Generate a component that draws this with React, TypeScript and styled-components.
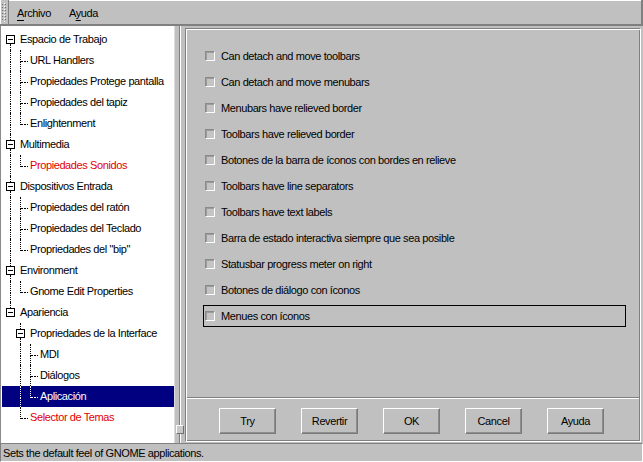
import React from 'react';
import styled, { createGlobalStyle } from 'styled-components';

const Global = createGlobalStyle`
  html, body { margin: 0; padding: 0; background: #c0c0c0; }
  body {
    width: 643px; height: 462px; overflow: hidden;
    font-family: "Liberation Sans", Arial, Helvetica, sans-serif;
    font-size: 11px; color: #000;
  }
`;

const Window = styled.div`
  width: 643px;
  height: 462px;
  display: flex;
  flex-direction: column;
  background: #c0c0c0;
`;

/* ---------- menubar ---------- */
const MenuBar = styled.div`
  height: 26px;
  box-sizing: border-box;
  display: flex;
  align-items: stretch;
  border-bottom: 2px solid #808080;
  border-right: 2px solid #808080;
`;

const Grip = styled.div`
  width: 9px;
  flex: none;
  box-sizing: border-box;
  border-right: 1px solid #808080;
  border-left: 1px solid #ffffff;
  display: flex;
`;

const MenuArea = styled.div`
  flex: 1;
  display: flex;
  align-items: center;
  gap: 2px;
  border-top: 1px solid #ffffff;
`;

const MenuItem = styled.div`
  padding: 0 8px;
  letter-spacing: -0.4px;
  white-space: nowrap;
  u { text-underline-offset: 3px; text-decoration-thickness: 1px; }
`;

/* ---------- main ---------- */
const Main = styled.div`
  flex: 1;
  display: flex;
  min-height: 0;
`;

const Tree = styled.div`
  width: 175px;
  flex: none;
  box-sizing: border-box;
  background: #ffffff;
  border-left: 1px solid #8c8c8c;
  border-right: 1px solid #dcdcdc;
  padding: 3px 0 0 1px;
  display: flex;
  flex-direction: column;
  overflow: hidden;
`;

const TreeRow = styled.div<{ $selected?: boolean }>`
  height: 21px;
  flex: none;
  display: flex;
  align-items: stretch;
  padding-left: 3px;
  background: ${(p) => (p.$selected ? '#000080' : 'transparent')};
  --line: ${(p) => (p.$selected ? '#ffffff' : '#000000')};
`;

const GuideCell = styled.div`
  width: 10px;
  flex: none;
  display: grid;
  grid-template-columns: 6px 4px;
  grid-template-rows: 12px 9px;
`;

const Quad = styled.div<{ $v?: boolean; $h?: boolean }>`
  box-sizing: border-box;
  border-right: ${(p) => (p.$v ? '1px dotted var(--line)' : 'none')};
  border-bottom: ${(p) => (p.$h ? '1px dotted var(--line)' : 'none')};
`;

const Stub = styled.div`
  width: 3px;
  height: 12px;
  flex: none;
  box-sizing: border-box;
  border-bottom: 1px dotted var(--line);
`;

const ExpCell = styled.div`
  width: 10px;
  flex: none;
  display: flex;
  flex-direction: column;
`;

const ExpSeg = styled.div<{ $on: boolean; $grow?: boolean }>`
  width: 6px;
  box-sizing: border-box;
  height: ${(p) => (p.$grow ? 'auto' : '6px')};
  flex: ${(p) => (p.$grow ? '1' : 'none')};
  border-right: ${(p) => (p.$on ? '1px dotted var(--line)' : 'none')};
`;

const ExpBox = styled.div`
  width: 9px;
  height: 9px;
  margin-left: 1px;
  box-sizing: border-box;
  border: 1px solid #000;
  background: #fff;
  display: flex;
  align-items: center;
  justify-content: center;
  flex: none;
`;

const Minus = styled.div`
  width: 5px;
  height: 1px;
  background: #000;
`;

const TreeLabel = styled.span<{ $red?: boolean; $selected?: boolean; $gap: number }>`
  margin-left: ${(p) => p.$gap}px;
  line-height: 21px;
  white-space: nowrap;
  letter-spacing: -0.4px;
  color: ${(p) => (p.$selected ? '#ffffff' : p.$red ? '#e10000' : '#000000')};
`;

/* ---------- paned gutter ---------- */
const Gutter = styled.div`
  width: 10px;
  flex: none;
  display: flex;
  flex-direction: column;
  align-items: center;
`;

const Groove = styled.div<{ $h?: number }>`
  width: 2px;
  box-sizing: border-box;
  border-left: 1px solid #808080;
  border-right: 1px solid #ffffff;
  flex: ${(p) => (p.$h ? 'none' : '1')};
  height: ${(p) => (p.$h ? `${p.$h}px` : 'auto')};
`;

const PaneHandle = styled.div`
  width: 8px;
  height: 9px;
  flex: none;
  box-sizing: border-box;
  background: #c8c8c8;
  border: 1px solid;
  border-color: #ffffff #707070 #707070 #ffffff;
`;

/* ---------- right pane ---------- */
const RightPane = styled.div`
  flex: 1;
  margin: 2px 2px 1px 0;
  box-sizing: border-box;
  border: 1px solid;
  border-color: #808080 #ffffff #ffffff #808080;
  box-shadow: inset 1px 1px 0 #ffffff, inset -1px -1px 0 #808080;
  padding: 1px;
  display: flex;
  flex-direction: column;
`;

const Options = styled.div`
  flex: 1;
  display: flex;
  flex-direction: column;
  gap: 4px;
  padding: 15px 13px 0 16px;
`;

const OptionRow = styled.label<{ $focus?: boolean }>`
  height: 22px;
  flex: none;
  box-sizing: border-box;
  border: 1px solid ${(p) => (p.$focus ? '#000000' : 'transparent')};
  display: flex;
  align-items: center;
  padding-left: 1px;
`;

const CheckBox = styled.span`
  width: 10px;
  height: 10px;
  flex: none;
  box-sizing: border-box;
  border: 1px solid;
  border-color: #8a8a8a #ffffff #ffffff #8a8a8a;
  background: #c4c4c4;
  box-shadow: inset 1px 1px 0 #9c9c9c;
  margin-right: 6px;
`;

const OptionText = styled.span`
  white-space: nowrap;
  letter-spacing: -0.4px;
`;

const Separator = styled.div`
  height: 2px;
  flex: none;
  box-sizing: border-box;
  border-top: 1px solid #808080;
  border-bottom: 1px solid #ffffff;
`;

const ButtonBar = styled.div`
  height: 41px;
  flex: none;
  box-sizing: border-box;
  padding: 9px 0 0 32px;
  display: flex;
  gap: 25px;
  align-items: flex-start;
`;

const Button = styled.button`
  width: 57px;
  height: 26px;
  padding: 0;
  box-sizing: border-box;
  background: #c0c0c0;
  border: 1px solid;
  border-color: #ffffff #7a7a7a #7a7a7a #ffffff;
  box-shadow: inset -1px -1px 0 #8e8e8e;
  font-family: inherit;
  font-size: 11px;
  letter-spacing: -0.4px;
  color: #000;
`;

/* ---------- status ---------- */
const StatusBar = styled.div`
  height: 19px;
  flex: none;
  box-sizing: border-box;
  border: 1px solid;
  border-color: #808080 #ffffff #ffffff #808080;
  padding-left: 2px;
  display: flex;
  align-items: center;
  letter-spacing: -0.4px;
  white-space: nowrap;
`;

type Guide = 'b' | 'p' | 't' | 'e';
interface TreeNode {
  label: string;
  guides: Guide[];
  exp?: { above: boolean; below: boolean };
  red?: boolean;
  selected?: boolean;
}

const nodes: TreeNode[] = [
  { label: 'Espacio de Trabajo', guides: [], exp: { above: false, below: true } },
  { label: 'URL Handlers', guides: ['p', 't'] },
  { label: 'Propiedades Protege pantalla', guides: ['p', 't'] },
  { label: 'Propiedades del tapiz', guides: ['p', 't'] },
  { label: 'Enlightenment', guides: ['p', 'e'] },
  { label: 'Multimedia', guides: [], exp: { above: true, below: true } },
  { label: 'Propiedades Sonidos', guides: ['p', 'e'], red: true },
  { label: 'Dispositivos Entrada', guides: [], exp: { above: true, below: true } },
  { label: 'Propiedades del ratón', guides: ['p', 't'] },
  { label: 'Propiedades del Teclado', guides: ['p', 't'] },
  { label: 'Propriedades del "bip"', guides: ['p', 'e'] },
  { label: 'Environment', guides: [], exp: { above: true, below: true } },
  { label: 'Gnome Edit Properties', guides: ['p', 'e'] },
  { label: 'Apariencia', guides: [], exp: { above: true, below: false } },
  { label: 'Propriedades de la Interface', guides: ['b'], exp: { above: true, below: true } },
  { label: 'MDI', guides: ['b', 'p', 't'] },
  { label: 'Diálogos', guides: ['b', 'p', 't'] },
  { label: 'Aplicación', guides: ['b', 'p', 'e'], selected: true },
  { label: 'Selector de Temas', guides: ['b', 'e'], red: true },
];

const GuideView: React.FC<{ g: Guide }> = ({ g }) => (
  <GuideCell>
    <Quad $v={g !== 'b'} />
    <Quad $h={g === 't' || g === 'e'} />
    <Quad $v={g === 'p' || g === 't'} />
    <Quad />
  </GuideCell>
);

const options = [
  'Can detach and move toolbars',
  'Can detach and move menubars',
  'Menubars have relieved border',
  'Toolbars have relieved border',
  'Botones de la barra de íconos con bordes en relieve',
  'Toolbars have line separators',
  'Toolbars have text labels',
  'Barra de estado interactiva siempre que sea posible',
  'Statusbar progress meter on right',
  'Botones de diálogo con íconos',
  'Menues con íconos',
];

const GripDots: React.FC = () => (
  <svg width="7" height="23" viewBox="0 0 7 23">
    <defs>
      <pattern id="grip" width="3" height="3" patternUnits="userSpaceOnUse">
        <rect x="0" y="0" width="1" height="1" fill="#ffffff" />
        <rect x="1" y="1" width="1" height="1" fill="#6e6e6e" />
      </pattern>
    </defs>
    <rect x="1" y="2" width="5" height="20" fill="url(#grip)" />
  </svg>
);

export default function App() {
  return (
    <Window>
      <Global />
      <MenuBar>
        <Grip>
          <GripDots />
        </Grip>
        <MenuArea>
          <MenuItem>
            <u>A</u>rchivo
          </MenuItem>
          <MenuItem>
            A<u>y</u>uda
          </MenuItem>
        </MenuArea>
      </MenuBar>
      <Main>
        <Tree>
          {nodes.map((n) => {
            const last = n.guides[n.guides.length - 1];
            const connector = !n.exp && (last === 't' || last === 'e');
            return (
              <TreeRow key={n.label} $selected={n.selected}>
                {n.guides.map((g, i) => (
                  <GuideView key={i} g={g} />
                ))}
                {n.exp && (
                  <ExpCell>
                    <ExpSeg $on={n.exp.above} />
                    <ExpBox>
                      <Minus />
                    </ExpBox>
                    <ExpSeg $on={n.exp.below} $grow />
                  </ExpCell>
                )}
                {connector && <Stub />}
                <TreeLabel $red={n.red} $selected={n.selected} $gap={connector ? 2 : 5}>
                  {n.label}
                </TreeLabel>
              </TreeRow>
            );
          })}
        </Tree>
        <Gutter>
          <Groove />
          <PaneHandle />
          <Groove $h={9} />
        </Gutter>
        <RightPane>
          <Options>
            {options.map((o, i) => (
              <OptionRow key={o} $focus={i === options.length - 1}>
                <CheckBox />
                <OptionText>{o}</OptionText>
              </OptionRow>
            ))}
          </Options>
          <Separator />
          <ButtonBar>
            <Button>Try</Button>
            <Button>Revertir</Button>
            <Button>OK</Button>
            <Button>Cancel</Button>
            <Button>Ayuda</Button>
          </ButtonBar>
        </RightPane>
      </Main>
      <StatusBar>Sets the default feel of GNOME applications.</StatusBar>
    </Window>
  );
}
